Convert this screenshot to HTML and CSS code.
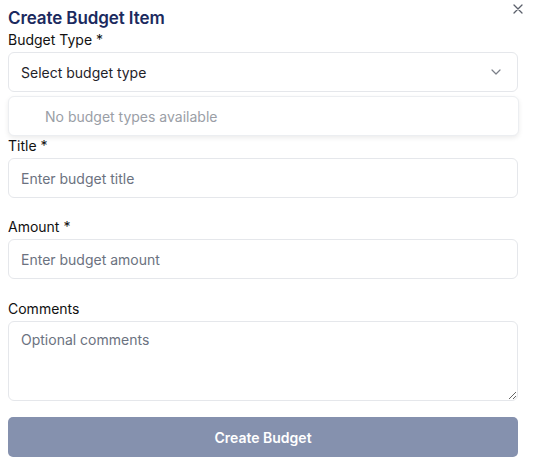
FILE: index.html
```html
<!DOCTYPE html>
<html lang="en">
<head>
<meta charset="utf-8">
<title>Create Budget Item</title>
<link rel="stylesheet" href="styles.css">
</head>
<body>
<div class="dialog">
  <button class="close" aria-label="Close">
    <svg width="10" height="10" viewBox="0 0 10 10"><path d="M1 1L9 9M9 1L1 9" stroke="#5b606b" stroke-width="1.3" stroke-linecap="round" fill="none"/></svg>
  </button>
  <h2 class="heading">Create Budget Item</h2>
  <div class="field field-select">
    <label class="label">Budget Type *</label>
    <div class="select">
      <span>Select budget type</span>
      <svg class="chev" width="10" height="6" viewBox="0 0 10 6"><path d="M1 1L5 5L9 1" stroke="#7b7f88" stroke-width="1.2" fill="none" stroke-linecap="round" stroke-linejoin="round"/></svg>
    </div>
    <div class="menu">No budget types available</div>
  </div>
  <div class="field">
    <label class="label">Title *</label>
    <input class="input" type="text" placeholder="Enter budget title">
  </div>
  <div class="field field-amount">
    <label class="label">Amount *</label>
    <input class="input" type="text" placeholder="Enter budget amount">
  </div>
  <div class="field field-last">
    <label class="label">Comments</label>
    <textarea class="textarea" placeholder="Optional comments"></textarea>
  </div>
  <button class="submit">Create Budget</button>
</div>
</body>
</html>
```
FILE: styles.css
```css
* { box-sizing: border-box; }
html, body { margin: 0; padding: 0; background: #fff; }
body { font-family: Inter, "Noto Sans", sans-serif; color: #0f172a; }
.dialog { position: relative; padding: 7px 18px 8px 8px; width: 536px; }
.close {
  position: absolute; top: 4px; left: 513px; width: 10px; height: 10px;
  padding: 0; margin: 0; border: 0; background: none; display: block;
}
.close svg { display: block; }
.heading {
  margin: 0; font-size: 17px; line-height: 23px; font-weight: 600; color: #1b2a5e;
  letter-spacing: -0.1px;
}
.field { display: flex; flex-direction: column; margin-bottom: 19px; }
.field-select { margin-bottom: 0; }
.field-amount { margin-bottom: 20px; }
.field-last { margin-bottom: 16px; }
.label { font-size: 14px; line-height: 20px; margin-bottom: 2px; color: #111111; }
.select {
  height: 40px; border: 1px solid #e5e7eb; border-radius: 6px;
  display: flex; align-items: center; justify-content: space-between;
  padding: 0 16px 0 12px; font-size: 14px; color: #1f2329;
}
.chev { display: block; }
.menu {
  margin-top: 4px; height: 40px; margin-right: -1px;
  border: 1px solid #eceef1; border-radius: 6px;
  box-shadow: 0 2px 5px rgba(0,0,0,0.08);
  display: flex; align-items: center; padding-left: 36px;
  font-size: 14px; color: #9a9ea6; background: #fff;
}
.input, .textarea {
  font-family: inherit; font-size: 14px; color: #111;
  border: 1px solid #e5e7eb; border-radius: 6px; padding: 0 12px; margin: 0;
  outline: none; background: #fff; width: 100%;
}
.input { height: 40px; }
.textarea { display: block; height: 80px; padding: 8px 12px; line-height: 20px; resize: vertical; }
.input::placeholder, .textarea::placeholder { color: #6b7280; opacity: 1; }
.submit {
  display: block; width: 100%; height: 40px; border: 0; border-radius: 5px;
  background: #8591ae; color: #fff; font-family: inherit; font-size: 14px; font-weight: 600;
}
```
